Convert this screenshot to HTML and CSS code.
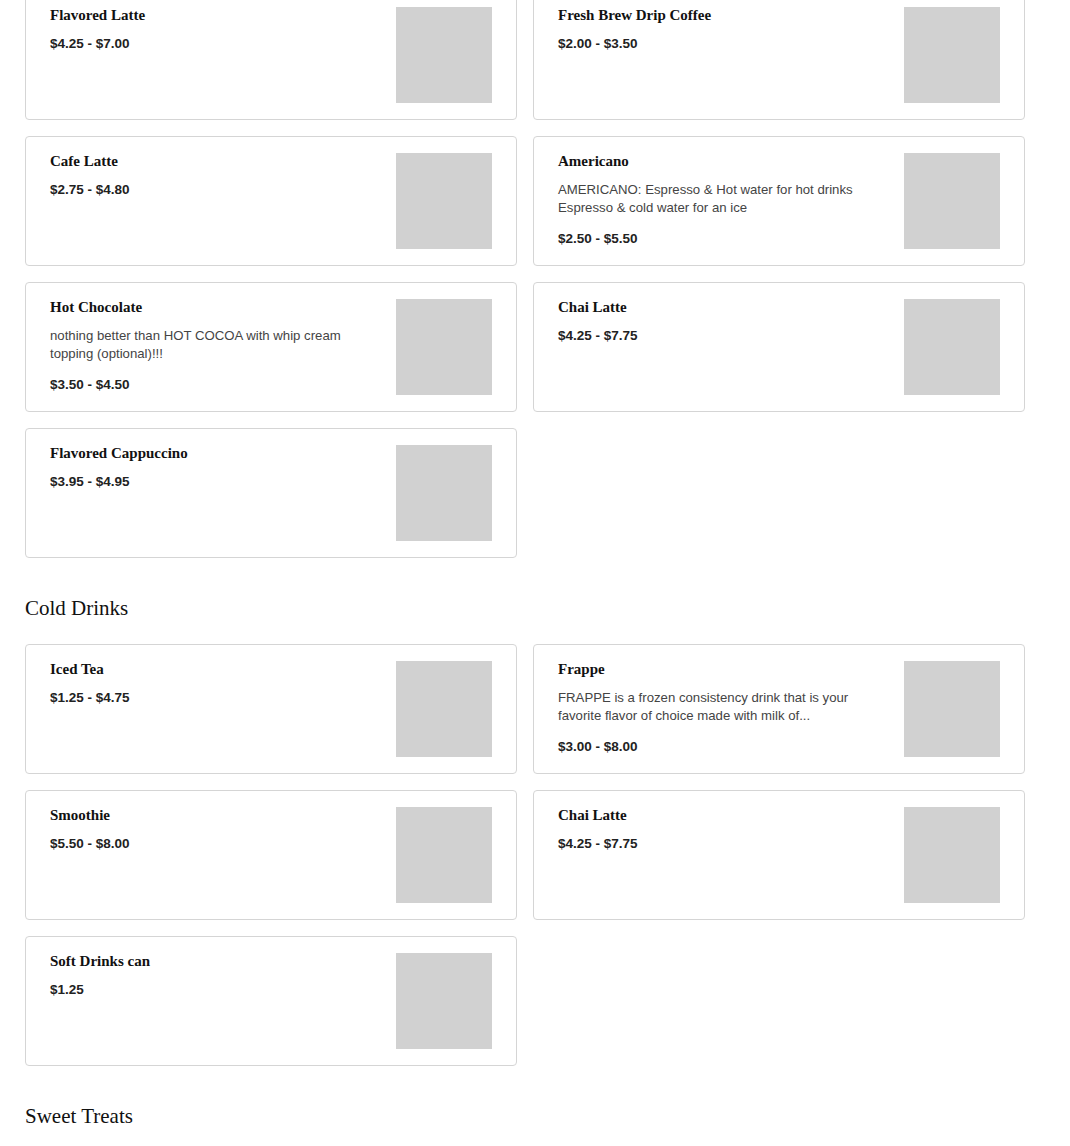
FILE: index.html
```html
<!DOCTYPE html>
<html>
<head>
<meta charset="utf-8">
<link rel="stylesheet" href="styles.css">
</head>
<body>
<main class="menu">
  <section class="section section-first">
    <div class="grid">
      <div class="card"><div class="info"><div class="title">Flavored Latte</div><div class="price">$4.25 - $7.00</div></div><div class="thumb"></div></div>
      <div class="card"><div class="info"><div class="title">Fresh Brew Drip Coffee</div><div class="price">$2.00 - $3.50</div></div><div class="thumb"></div></div>
      <div class="card"><div class="info"><div class="title">Cafe Latte</div><div class="price">$2.75 - $4.80</div></div><div class="thumb"></div></div>
      <div class="card"><div class="info"><div class="title">Americano</div><div class="desc">AMERICANO: Espresso &amp; Hot water for hot drinks Espresso &amp; cold water for an ice</div><div class="price">$2.50 - $5.50</div></div><div class="thumb"></div></div>
      <div class="card"><div class="info"><div class="title">Hot Chocolate</div><div class="desc">nothing better than HOT COCOA with whip cream topping (optional)!!!</div><div class="price">$3.50 - $4.50</div></div><div class="thumb"></div></div>
      <div class="card"><div class="info"><div class="title">Chai Latte</div><div class="price">$4.25 - $7.75</div></div><div class="thumb"></div></div>
      <div class="card"><div class="info"><div class="title">Flavored Cappuccino</div><div class="price">$3.95 - $4.95</div></div><div class="thumb"></div></div>
    </div>
  </section>
  <section class="section">
    <h2 class="heading">Cold Drinks</h2>
    <div class="grid">
      <div class="card"><div class="info"><div class="title">Iced Tea</div><div class="price">$1.25 - $4.75</div></div><div class="thumb"></div></div>
      <div class="card"><div class="info"><div class="title">Frappe</div><div class="desc">FRAPPE is a frozen consistency drink that is your favorite flavor of choice made with milk of...</div><div class="price">$3.00 - $8.00</div></div><div class="thumb"></div></div>
      <div class="card"><div class="info"><div class="title">Smoothie</div><div class="price">$5.50 - $8.00</div></div><div class="thumb"></div></div>
      <div class="card"><div class="info"><div class="title">Chai Latte</div><div class="price">$4.25 - $7.75</div></div><div class="thumb"></div></div>
      <div class="card"><div class="info"><div class="title">Soft Drinks can</div><div class="price">$1.25</div></div><div class="thumb"></div></div>
    </div>
  </section>
  <section class="section">
    <h2 class="heading">Sweet Treats</h2>
  </section>
</main>
</body>
</html>
```
FILE: styles.css
```css
html, body {
  margin: 0;
  padding: 0;
  background: #ffffff;
}
body {
  font-family: "Liberation Sans", Arial, sans-serif;
  color: #222;
  overflow: hidden;
}
.menu {
  width: 1000px;
  padding-left: 25px;
}
.section-first {
  margin-top: -10px;
}
.heading {
  margin: 36px 0 22px;
  font-family: "Liberation Serif", "Times New Roman", serif;
  font-weight: normal;
  font-size: 21px;
  line-height: 28px;
  color: #111;
}
.grid {
  display: grid;
  grid-template-columns: 492px 492px;
  gap: 16px;
}
.card {
  box-sizing: border-box;
  height: 130px;
  border: 1px solid #d5d5d5;
  border-radius: 4px;
  padding: 16px 24px;
  display: flex;
  gap: 28px;
  background: #fff;
}
.info {
  flex: 1;
  min-width: 0;
  display: flex;
  flex-direction: column;
}
.title {
  font-family: "Liberation Serif", "Times New Roman", serif;
  font-weight: bold;
  font-size: 15px;
  line-height: 16px;
  color: #111;
}
.desc {
  margin-top: 12px;
  font-size: 13.2px;
  line-height: 18px;
  color: #444;
}
.price {
  margin-top: 12px;
  font-size: 13.5px;
  font-weight: bold;
  line-height: 18px;
  color: #222;
}
.desc + .price {
  margin-top: 13px;
}
.thumb {
  flex: 0 0 96px;
  width: 96px;
  height: 96px;
  background: #d1d1d1;
}
```
